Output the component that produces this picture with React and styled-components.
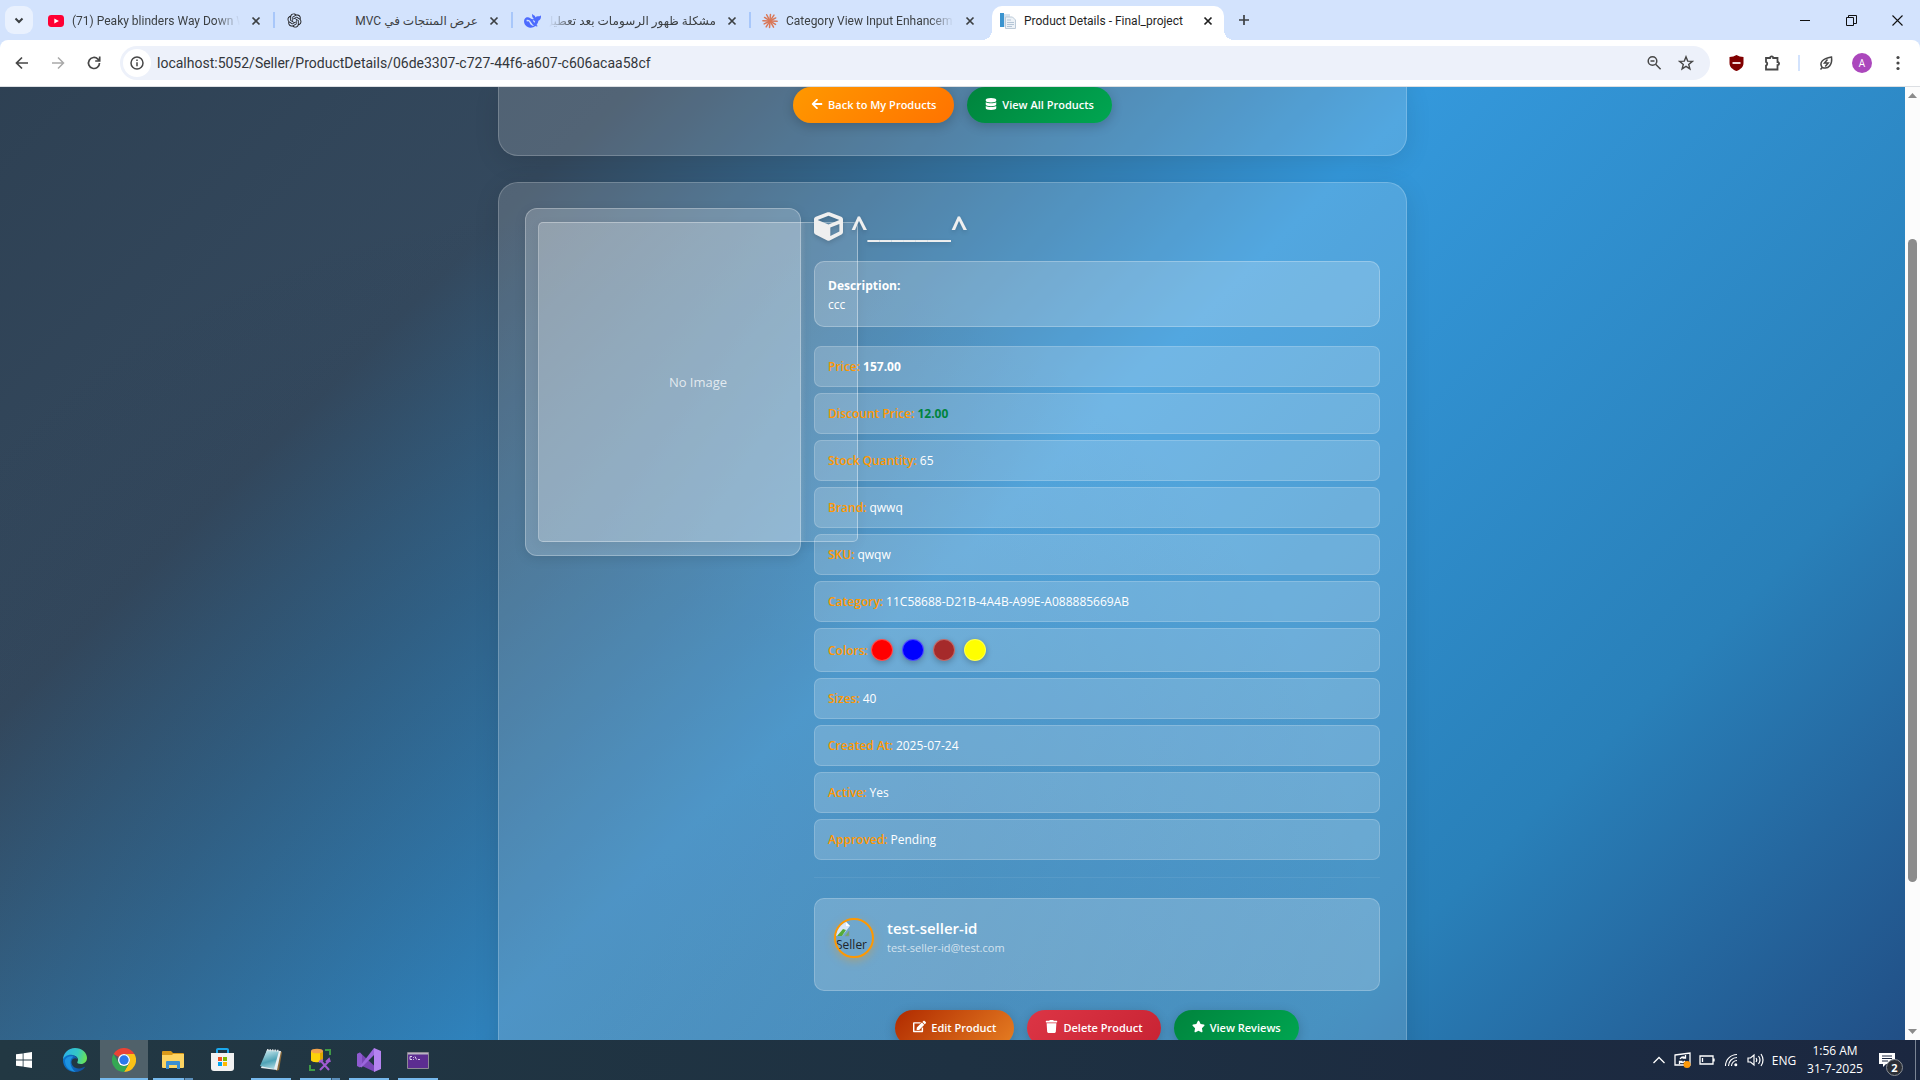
import React from 'react';
import styled, { createGlobalStyle, css } from 'styled-components';
import { FaArrowLeft, FaDatabase, FaCube, FaEdit, FaTrash, FaStar } from 'react-icons/fa';
import { RiOpenaiFill } from 'react-icons/ri';

const Global = createGlobalStyle`
  *, *::before, *::after { box-sizing: border-box; }
  body { margin: 0; font-family: "Open Sans", "Noto Sans", "DejaVu Sans", sans-serif; font-size: 12px; }
  button, input { font: inherit; border: 0; padding: 0; background: none; color: inherit; }
  h1, h2, p, dl, dt, dd, ul { margin: 0; padding: 0; }
  a { color: inherit; text-decoration: none; }
`;

const Screen = styled.div`
  display: flex;
  flex-direction: column;
  height: 100vh;
  overflow: hidden;
`;

/* ---------- browser tab strip ---------- */

const TabStrip = styled.header`
  display: flex;
  align-items: flex-end;
  height: 40px;
  padding-left: 5px;
  background: #d3e3fd;
  color: #3c4043;
`;

const TabSearch = styled.button`
  display: grid;
  place-items: center;
  width: 28px;
  height: 28px;
  margin: 0 4px 6px 0;
  border-radius: 9px;
  background: #e9f1fe;
`;

const Tab = styled.div`
  position: relative;
  display: flex;
  align-items: center;
  gap: 8px;
  width: 238px;
  height: 34px;
  padding: 0 11px 5px;
  ${(p) => p.$divided && css`
    background: linear-gradient(#a8c7fa, #a8c7fa) right 6px / 2px 16px no-repeat;
  `}
  ${(p) => p.$active && css`
    width: 232px;
    margin: 0 3px;
    padding: 0 8px 5px;
    border-radius: 10px 10px 0 0;
    background: #fff;
    color: #1f1f1f;
    &::before, &::after {
      content: "";
      position: absolute;
      bottom: 0;
      width: 10px;
      height: 10px;
    }
    &::before { left: -10px; background: radial-gradient(circle at 0 0, transparent 10px, #fff 10px); }
    &::after { right: -10px; background: radial-gradient(circle at 100% 0, transparent 10px, #fff 10px); }
  `}
`;

const TabTitle = styled.span`
  flex: 1;
  min-width: 0;
  overflow: hidden;
  white-space: nowrap;
  line-height: 20px;
  font-family: Roboto, "Noto Sans", "DejaVu Sans", sans-serif;
  font-size: 12px;
  ${(p) => p.$fade && css`mask-image: linear-gradient(to ${p.$fade}, #000 85%, transparent);`}
`;

const IconButton = styled.button`
  display: grid;
  place-items: center;
  flex: none;
  width: ${(p) => p.$w || 16}px;
  height: ${(p) => p.$h || 16}px;
`;

const WindowControls = styled.div`
  display: flex;
  margin-left: auto;
  align-self: center;
  color: #111;
`;

/* ---------- browser toolbar ---------- */

const ToolbarBack = styled.div`
  background: #d3e3fd;
`;

const Toolbar = styled.nav`
  display: flex;
  align-items: center;
  height: 47px;
  padding: 0 4px;
  border-bottom: 1px solid #dcdfe3;
  border-radius: 8px 8px 0 0;
  background: #fff;
  color: #474747;
`;

const AddressBar = styled.div`
  display: flex;
  align-items: center;
  flex: 1;
  height: 34px;
  margin: 0 8px;
  padding: 0 8px 0 3px;
  border-radius: 17px;
  background: #edf1fa;
`;

const SiteInfo = styled.button`
  display: grid;
  place-items: center;
  width: 28px;
  height: 28px;
  margin-right: 6px;
  border-radius: 50%;
  background: #fff;
`;

const Address = styled.input`
  flex: 1;
  min-width: 0;
  font-family: Roboto, "Noto Sans", sans-serif;
  font-size: 14px;
  color: #33363b;
  outline: 0;
`;

const ToolbarDivider = styled.span`
  width: 2px;
  height: 16px;
  margin: 0 8px;
  background: #d3e3fd;
`;

const Profile = styled.button`
  width: 20px;
  height: 20px;
  margin: 0 8px;
  border-radius: 50%;
  background: #ab47bc;
  color: #fff;
  font-size: 10px;
  line-height: 20px;
`;

/* ---------- page ---------- */

const Viewport = styled.div`
  display: flex;
  flex: 1;
  min-height: 0;
`;

const Page = styled.main`
  flex: 1;
  min-width: 0;
  overflow: hidden;
  padding: 0 20px;
  background:
    radial-gradient(ellipse 42% 80% at 30% 92%, rgba(28, 44, 66, 0.22), rgba(28, 44, 66, 0.16) 50%, rgba(28, 44, 66, 0) 100%),
    linear-gradient(135deg, #2c3e50 -7%, #34495e 22%, #3498db 50%, #2980b9 79%, #1e3c72 108%);
  color: #fff;
`;

const Column = styled.div`
  display: flex;
  flex-direction: column;
  gap: 26px;
  max-width: 909px;
  margin: 0 auto;
`;

const glass = css`
  border: 1px solid rgba(255, 255, 255, 0.2);
  background: rgba(255, 255, 255, 0.15);
`;

const HeaderCard = styled.section`
  ${glass}
  border-top: 0;
  border-radius: 0 0 20px 20px;
  padding: 0 26px 32px;
  box-shadow: 0 6px 26px rgba(0, 0, 0, 0.1);
`;

const ProductCard = styled.section`
  ${glass}
  display: grid;
  grid-template-columns: 276px minmax(0, 1fr);
  gap: 13px;
  border-radius: 20px;
  padding: 25px 26px;
  box-shadow: 0 6px 26px rgba(0, 0, 0, 0.1);
`;

const ButtonRow = styled.div`
  display: flex;
  justify-content: center;
  gap: 13px;
`;

const fills = {
  orange: 'linear-gradient(135deg, #ff9800, #ff7300)',
  green: 'linear-gradient(135deg, #00843d, #00a651)',
  rust: 'linear-gradient(135deg, #b02a00, #e67e22)',
  red: 'linear-gradient(135deg, #dc3545, #c82333)',
};

const PillButton = styled.button`
  display: flex;
  align-items: center;
  gap: 5px;
  height: 36px;
  padding: 0 18px;
  border-radius: 18px;
  background: ${(p) => fills[p.$fill]};
  box-shadow: 0 3px 12px rgba(0, 0, 0, 0.2);
  color: #fff;
  font-size: 11px;
  font-weight: 600;
  line-height: 18px;
  white-space: nowrap;
  padding-bottom: 1px;
  svg { margin-bottom: 2px; }
`;

const Gallery = styled.figure`
  align-self: start;
  margin: 0;
  padding: 13px 12px;
  border: 1px solid rgba(255, 255, 255, 0.28);
  border-radius: 12px;
  background: rgba(255, 255, 255, 0.2);
  box-shadow: 0 3px 12px rgba(0, 0, 0, 0.1);
`;

const Placeholder = styled.div`
  display: grid;
  place-items: center;
  width: 320px;
  height: 320px;
  border: 1px solid rgba(255, 255, 255, 0.32);
  border-radius: 5px;
  background: linear-gradient(90deg, rgba(255, 255, 255, 0.22) 82%, rgba(255, 255, 255, 0.1) 84%);
  box-shadow: 0 3px 12px rgba(0, 0, 0, 0.06);
  color: rgba(255, 255, 255, 0.75);
  font-size: 13px;
`;

const Title = styled.h1`
  display: flex;
  align-items: center;
  gap: 8px;
  height: 36px;
  margin-bottom: 17px;
  color: #efefef;
  font-size: 29px;
  line-height: 36px;
  filter: drop-shadow(0 2px 2px rgba(0, 0, 0, 0.15));
`;

const Description = styled.div`
  padding: 14px 13px 12px;
  margin-bottom: 19px;
  border: 1px solid rgba(255, 255, 255, 0.25);
  border-radius: 10px;
  background: rgba(255, 255, 255, 0.2);
  line-height: 19px;
`;

const DescriptionTitle = styled.h2`
  font-size: 12px;
  font-weight: 700;
`;

const Facts = styled.dl`
  display: grid;
  gap: 6px;
`;

const Fact = styled.div`
  display: flex;
  align-items: center;
  gap: 3px;
  padding: 10px 13px;
  border: 1px solid rgba(255, 255, 255, 0.18);
  border-radius: 7px;
  background: rgba(255, 255, 255, 0.18);
  line-height: 19px;
`;

const FactName = styled.dt`
  color: #ff9800;
  font-weight: 600;
`;

const tones = { plain: '#fff', strong: '#fff', sale: '#00843d' };

const FactValue = styled.dd`
  color: ${(p) => tones[p.$tone || 'plain']};
  font-weight: ${(p) => (p.$tone ? 700 : 400)};
`;

const Swatches = styled.ul`
  display: flex;
  gap: 9px;
  list-style: none;
`;

const Swatch = styled.li`
  width: 22px;
  height: 22px;
  border: 1px solid rgba(255, 255, 255, 0.3);
  border-radius: 50%;
  background: ${(p) => p.$color};
  box-shadow: 0 2px 6px rgba(0, 0, 0, 0.25);
`;

const Rule = styled.hr`
  height: 1px;
  margin: 17px 0 20px;
  border: 0;
  background: rgba(255, 255, 255, 0.07);
`;

const Seller = styled.section`
  ${glass}
  display: flex;
  gap: 13px;
  min-height: 93px;
  padding: 19px;
  margin-bottom: 19px;
  border-radius: 10px;
  background: rgba(255, 255, 255, 0.2);
`;

const Avatar = styled.div`
  display: flex;
  flex-direction: column;
  flex: none;
  width: 40px;
  height: 40px;
  overflow: hidden;
  padding-top: 2px;
  border: 2px solid #ff9800;
  border-radius: 50%;
  box-shadow: 0 3px 10px rgba(255, 152, 0, 0.35);
  color: #212529;
  font-size: 12px;
  line-height: 16px;
  svg { display: block; flex: none; }
`;

const SellerName = styled.h2`
  font-size: 15px;
  font-weight: 600;
  line-height: 20px;
`;

const SellerMail = styled.p`
  color: rgba(255, 255, 255, 0.7);
  font-size: 11px;
  line-height: 20px;
`;

const ScrollTrack = styled.aside`
  display: flex;
  flex-direction: column;
  align-items: center;
  width: 15px;
  padding: 6px 0;
  background: #fcfcfc;
  color: #8b8b8b;
`;

const ScrollThumb = styled.div`
  width: 9px;
  border-radius: 5px;
  background: #8b8b8b;
  flex: 642;
`;

const ScrollSpace = styled.div`
  flex: ${(p) => p.$part};
`;

/* ---------- taskbar ---------- */

const Taskbar = styled.footer`
  display: flex;
  height: 40px;
  background: linear-gradient(90deg, #223843, #1e3142 50%, #1b2740);
  color: #fff;
`;

const Apps = styled.div`
  display: grid;
  grid-template-columns: 50px repeat(8, 48px);
  column-gap: 1px;
`;

const AppButton = styled.button`
  display: grid;
  place-items: center;
  padding-right: ${(p) => (p.$start ? 2 : 0)}px;
  ${(p) => p.$running && css`
    background: linear-gradient(#76b9ed, #76b9ed) center bottom / 40px 2px no-repeat;
  `}
  ${(p) => p.$stacked && css`
    background:
      linear-gradient(90deg, #76b9ed 31px, #35536a 31px, #35536a 32px, #5b8fbb 32px) center bottom / 40px 2px no-repeat;
  `}
  ${(p) => p.$current && css`
    background: linear-gradient(#76b9ed, #76b9ed) center bottom / 48px 2px no-repeat, #50616a;
  `}
`;

const Tray = styled.div`
  display: flex;
  align-items: center;
  margin-left: auto;
  font-size: 12px;
`;

const Language = styled.button`
  width: 34px;
  height: 40px;
`;

const Clock = styled.time`
  width: 68px;
  line-height: 18px;
  text-align: center;
  white-space: pre-line;
`;

const Notices = styled.button`
  width: 47px;
  height: 40px;
  display: grid;
  place-items: center;
  position: relative;
  border-right: 1px solid #7a8494;
  margin-right: 4px;
  svg { margin-right: 10px; }
`;

const Badge = styled.span`
  position: absolute;
  left: 17px;
  top: 19px;
  width: 17px;
  height: 17px;
  border: 1px solid #8a8f96;
  border-radius: 50%;
  background: #2b2f36;
  font-size: 11px;
  font-weight: 700;
  line-height: 15px;
`;

/* ---------- drawings ---------- */

const Line = ({ d, w = 16, h = w, s = 1.5, box, children, ...rest }) => (
  <svg width={w} height={h} viewBox={box || `0 0 ${w} ${h}`} fill="none" stroke="currentColor" strokeWidth={s} {...rest}>
    {d && <path d={d} />}
    {children}
  </svg>
);

const CloseIcon = () => <Line d="M4.5 4.5l7 7M11.5 4.5l-7 7" s={1.7} />;

const YouTube = () => (
  <svg width="16" height="16" viewBox="0 0 16 16">
    <rect y="2" width="16" height="12" rx="3.4" fill="#ff0033" />
    <path d="M6.3 5.4l4.6 2.6-4.6 2.6z" fill="#fff" />
  </svg>
);

const DeepSeek = () => (
  <svg width="17" height="16" viewBox="0 0 24 22">
    <path fill="#4d6bfe" d="M23.7 3.2c-.3-.1-.4.1-.6.3-1 .9-2 1-3.1.9-1.5-.1-2.800.4-3.9 1.5-.3-1.5-1.1-2.3-2.3-2.9-.6-.3-1-.6-1.2-1.4-.2-.5-.6-.6-.8 0-.8 2.100-.3 4.200 1.200 5.500.9.8.7 1.600-.3 1.500C9.500 8.200 6.800 4 3 6.200.9 7.400-.2 9.800.1 12.500c.5 4.300 4 7.600 8.500 8 3.200.3 5.300-.8 7.200-2.300.7.3 2.200.7 3.100.3.5-.3.5-.7.1-.9-1-.5-1.300-.7-1.300-1 1.300-1.600 2.300-3.400 2.600-5.800 1.900-.5 3.400-2.300 3.600-5 .1-1.100.1-2.500-.2-2.600z" />
    <path fill="#d3e3fd" d="M3.700 9.400c3.500-.9 5.600 2 7 4.500 1.200 2.100 2.300 2.900 3.700 3.800-5.400.4-6-4.100-7.300-5.700-.8-.9-2.100-.9-2.800-.1-.7-.9-.9-1.600-.6-2.500zM12.200 10c.9-.6 2.400 0 3.100 1.400.6 1.300-.1 2.100-1 1.700-.8-.3-1.100-2.500-2.100-3.100z" />
  </svg>
);

const Claude = () => (
  <svg width="16" height="16" viewBox="0 0 16 16" stroke="#d97757" strokeWidth="1.5" strokeLinecap="round">
    {[4, 34, 62, 93, 122, 150, 184, 213, 244, 272, 303, 332].map((a, i) => (
      <path key={a} d={`M8 7.5V${i % 2 ? 0.9 : 1.5}`} transform={`rotate(${a} 8 8)`} />
    ))}
  </svg>
);

const PageIcon = () => (
  <svg width="16" height="16" viewBox="0 0 16 16">
    <path d="M0 0h4v14H0z" fill="#3b94cf" />
    <path d="M4 1h6v4H5v9H4z" fill="#d5e2ee" />
    <path d="M5.5 4h7l3 3v8.500h-10z" fill="#edf2f7" stroke="#bccad8" />
    <path d="M7 7h4M7 9.500h7M7 11.500h7M7 13.500h5" stroke="#b4c5d6" />
  </svg>
);

const BrokenImage = () => (
  <svg width="16" height="15" viewBox="0 0 16 15">
    <path d="M0 0h10l4 4-8 10H0z" fill="#d9e6f7" />
    <path d="M10 0v4h4z" fill="#fff" />
    <path d="M1 14l6-7 3 1-4 6z" fill="#54ab3a" />
    <path d="M9 14l4-5v5z" fill="#6ab35a" stroke="#8a949c" strokeWidth=".7" />
  </svg>
);

const Edge = () => (
  <svg width="24" height="24" viewBox="0 0 24 24">
    <defs>
      <linearGradient id="edgeTop" x1="0" x2="1" y1=".3" y2=".5"><stop stopColor="#2bb1e8" /><stop offset=".6" stopColor="#35c9c3" /><stop offset="1" stopColor="#6be354" /></linearGradient>
      <linearGradient id="edgeLow" x1="0" x2="1"><stop stopColor="#0c77cf" /><stop offset="1" stopColor="#124e9c" /></linearGradient>
    </defs>
    <path d="M0 12C0 5 5.300 0 12 0c7 0 12 4.600 12 10 0 3.600-2.800 6-6 6-2.600 0-4.300-.9-3.600-2 1.600-2.200.2-6.500-4.400-6.500C5 7.500 1 9.500 0 12z" fill="url(#edgeTop)" />
    <path d="M0 12c1-3.500 5-5.800 9.500-5 2.500.4 4.500 2 4.800 4-2-1.500-5.300-.5-5.800 2.600-.5 3.900 3.300 7.500 8 6.800 2.200-.3 3.800-1.200 4.700-1.500.7-.2.800.3.400.9C19.700 22.300 16.200 24 12 24 5 24 0 18.600 0 12z" fill="url(#edgeLow)" />
    <path d="M2 12c1.500-3 5-4.500 8.500-3.300C6 10.500 6.300 19 12.500 23.900 5.500 23 1.500 17.500 2 12z" fill="#1c93e0" />
  </svg>
);

const Chrome = () => (
  <svg width="24" height="24" viewBox="0 0 24 24">
    <path d="M1.600 6A12 12 0 0 1 22.400 6H12a6 6 0 0 0-5.200 3z" fill="#ea4335" />
    <path d="M22.400 6A12 12 0 0 1 12 24l5.200-9A6 6 0 0 0 12 6z" fill="#fbc116" />
    <path d="M12 24A12 12 0 0 1 1.600 6l5.200 9A6 6 0 0 0 17.200 15z" fill="#34a853" />
    <circle cx="12" cy="12" r="6" fill="#fff" />
    <circle cx="12" cy="12" r="4.700" fill="#2b78ec" />
  </svg>
);

const Explorer = () => (
  <svg width="22" height="18" viewBox="0 0 22 18">
    <path d="M0 1q0-1 1-1h8l2 2h10q1 0 1 1v4H0z" fill="#d99a1a" />
    <path d="M0 4h10l1-1h11v13q0 1-1 1H1q-1 0-1-1z" fill="#fdd462" />
    <path d="M4 18v-7q0-1 1-1h12q1 0 1 1v7h-3v-4H7v4z" fill="#3b8fd2" />
  </svg>
);

const Store = () => (
  <svg width="23" height="24" viewBox="0 0 23 24">
    <path d="M6 6V1.800Q6 1 7 1h9q1 0 1 .8V6" fill="none" stroke="#1ba8ee" strokeWidth="2" />
    <path d="M0 5h23v15q0 3-3 3H3q-3 0-3-3z" fill="#f2f2f2" />
    <path d="M7 9h4v4H7z" fill="#f25022" /><path d="M12 9h4v4h-4z" fill="#7fba00" />
    <path d="M7 14h4v4H7z" fill="#00a4ef" /><path d="M12 14h4v4h-4z" fill="#ffb900" />
  </svg>
);

const Notepad = () => (
  <svg width="24" height="24" viewBox="0 0 24 24">
    <defs><linearGradient id="pad" x1=".3" x2=".6" y2="1"><stop stopColor="#c8e8ee" /><stop offset=".6" stopColor="#4fa3b6" /><stop offset="1" stopColor="#a9d6df" /></linearGradient></defs>
    <path d="M21 3l2 1-3 18-3 1z" fill="#8a6a3c" />
    <path d="M8 2l14 1-4 19-16-2z" fill="#e8eef0" />
    <path d="M8 2l12 1-5 18L1 18z" fill="url(#pad)" />
    <path d="M8 2l12 .8" stroke="#dfe3e5" strokeWidth="2" strokeDasharray="1.5 1" />
  </svg>
);

const Ssms = () => (
  <svg width="24" height="24" viewBox="0 0 24 24">
    <path d="M3 3v9c0 3 12 3 12 0V3z" fill="#fbd20a" /><path d="M12 3v10.500c2-.4 3-1 3-1.500V3z" fill="#e0a800" />
    <ellipse cx="9" cy="3" rx="6" ry="2.300" fill="#f0a24c" />
    <path d="M17 2h5v5M2 17v5h5" fill="none" stroke="#3f9a46" strokeWidth="2" />
    <path d="M12 22l9-9M13 13l8 9M11 14l4-2M18 14l3-3 1 3" fill="none" stroke="#a05bd0" strokeWidth="2" />
  </svg>
);

const VisualStudio = () => (
  <svg width="24" height="24" viewBox="0 0 24 24">
    <path d="M0 6l3-1.500 15 14V24L2 16.500 0 17z" fill="#7a47b8" />
    <path d="M0 6l3-1.500L5 7v10l-2 2.500L0 18z" fill="#8f5bd0" />
    <path d="M4.500 19.500l-1.700-1L17 0v7z" fill="#9b66dd" />
    <path d="M17 0l7 3v18l-7 3z" fill="#b583f0" />
  </svg>
);

const Terminal = () => (
  <svg width="22" height="17" viewBox="0 0 22 17">
    <path d="M.5.5h21v16H.5z" fill="#5c2d91" stroke="#8d8a94" />
    <path d="M1 1h20v1.500H1z" fill="#b9b4c2" />
    <path d="M5 4.500H3v3h2M6.500 5v.8M6.500 7v.8M8 4.500l1.500 3M11 7.500h2" fill="none" stroke="#e8def4" strokeWidth=".9" />
  </svg>
);

/* ---------- data ---------- */

const tabs = [
  { title: '(71) Peaky blinders Way Down W', icon: <YouTube />, fade: 'right', divided: true },
  { title: 'عرض المنتجات في MVC', icon: <RiOpenaiFill size={17} color="#202123" />, dir: 'rtl', divided: true },
  { title: 'مشكلة ظهور الرسومات بعد تعطيل', icon: <DeepSeek />, dir: 'rtl', fade: 'left', divided: true },
  { title: 'Category View Input Enhancem', icon: <Claude />, fade: 'right' },
  { title: 'Product Details - Final_project', icon: <PageIcon />, active: true },
];

const leading = [
  { name: 'Price:', value: '157.00', tone: 'strong' },
  { name: 'Discount Price:', value: '12.00', tone: 'sale' },
  { name: 'Stock Quantity:', value: '65' },
  { name: 'Brand:', value: 'qwwq' },
  { name: 'SKU:', value: 'qwqw' },
  { name: 'Category:', value: '11C58688-D21B-4A4B-A99E-A088885669AB' },
];

const trailing = [
  { name: 'Sizes:', value: '40' },
  { name: 'Created At:', value: '2025-07-24' },
  { name: 'Active:', value: 'Yes' },
  { name: 'Approved:', value: 'Pending' },
];

const colors = ['red', 'blue', 'brown', 'yellow'];

const apps = [
  { name: 'Edge', icon: <Edge /> },
  { name: 'Chrome', icon: <Chrome />, current: true },
  { name: 'File Explorer', icon: <Explorer />, stacked: true },
  { name: 'Store', icon: <Store /> },
  { name: 'Notepad', icon: <Notepad />, running: true },
  { name: 'SQL Server', icon: <Ssms />, stacked: true },
  { name: 'Visual Studio', icon: <VisualStudio />, running: true },
  { name: 'Terminal', icon: <Terminal />, running: true },
];

const FactRow = ({ name, value, tone }) => (
  <Fact>
    <FactName>{name}</FactName>
    <FactValue $tone={tone}>{value}</FactValue>
  </Fact>
);

function BrowserChrome() {
  return (
    <>
      <TabStrip>
        <TabSearch aria-label="Search tabs"><Line d="M4.5 6.500L8 10l3.500-3.500" s={2} /></TabSearch>
        {tabs.map((t) => (
          <Tab key={t.title} $active={t.active} $divided={t.divided}>
            {t.icon}
            <TabTitle dir={t.dir} $fade={t.fade}>{t.title}</TabTitle>
            <IconButton aria-label="Close tab"><CloseIcon /></IconButton>
          </Tab>
        ))}
        <IconButton $w={34} $h={40} aria-label="New tab"><Line d="M8 3v10M3 8h10" s={1.7} /></IconButton>
        <WindowControls>
          <IconButton $w={46} $h={38} aria-label="Minimize"><Line w={10} d="M0 5.500h10" s={1} /></IconButton>
          <IconButton $w={46} $h={38} aria-label="Restore"><Line w={11} d="M.5 2.500h7v8h-7zM2.500 2.500v-2h8v8h-3" s={1} /></IconButton>
          <IconButton $w={46} $h={38} aria-label="Close"><Line w={11} d="M.5.5l10 10M10.500.5l-10 10" s={1.1} /></IconButton>
        </WindowControls>
      </TabStrip>
      <ToolbarBack>
        <Toolbar>
          <IconButton $w={36} $h={34} aria-label="Back"><Line d="M14 8H2.500M8 2.500L2.500 8 8 13.500" s={1.7} /></IconButton>
          <IconButton $w={36} $h={34} aria-label="Forward"><Line d="M2 8h11.500M8 2.500L13.500 8 8 13.500" color="#a9a9a9" /></IconButton>
          <IconButton $w={36} $h={34} aria-label="Reload"><Line d="M13.500 8A5.500 5.500 0 1 1 11.900 4.100L13.500 5.700M13.700 1.500v4.500H9.200" s={1.7} /></IconButton>
          <AddressBar>
            <SiteInfo aria-label="Site information">
              <Line w={16} s={1.5}><circle cx="8" cy="8" r="6" /><path d="M8 7.200v4M8 4.600v1.500" /></Line>
            </SiteInfo>
            <Address aria-label="Address" defaultValue="localhost:5052/Seller/ProductDetails/06de3307-c727-44f6-a607-c606acaa58cf" />
            <IconButton $w={32} $h={32} aria-label="Zoom"><Line><circle cx="6.500" cy="6" r="4.300" /><path d="M9.600 9.300l5 5M4.500 6h4" /></Line></IconButton>
            <IconButton $w={32} $h={32} aria-label="Bookmark"><Line d="M8 1.800l1.700 4.300 4.600.3-3.600 3 1.200 4.500L8 11.400l-3.900 2.500 1.200-4.500-3.600-3 4.600-.3z" s={1.4} /></IconButton>
          </AddressBar>
          <IconButton $w={36} $h={34} aria-label="Blocker">
            <svg width="15" height="16" viewBox="0 0 15 16"><path d="M7.500 0q3 1.800 7 2v6c0 4-3 6.500-7 8-4-1.500-7-4-7-8V2q4-.2 7-2z" fill="#800000" /><path d="M3.500 8h8" stroke="#f2dada" strokeWidth="2" /></svg>
          </IconButton>
          <IconButton $w={36} $h={34} aria-label="Extensions"><Line d="M2 3h4a1.600 1.600 0 0 1 3.200 0h4.300v4a1.600 1.600 0 0 1 0 3.200v4.300H2v-4a2 2 0 0 0 0-3.700z" s={1.8} /></IconButton>
          <ToolbarDivider />
          <IconButton $w={36} $h={34} aria-label="Performance"><Line d="M2.500 14.500l1.700-2C1 8 4 3.500 13.500 2 14.500 9 11 15 4.200 12.500M9.500 4.500L6.500 8h3.700l-3 3.500" s={1.5} /></IconButton>
          <Profile aria-label="Profile">A</Profile>
          <IconButton $w={36} $h={34} aria-label="Menu">
            <svg width="4" height="16" fill="#474747"><circle cx="2" cy="2.500" r="1.600" /><circle cx="2" cy="8" r="1.600" /><circle cx="2" cy="13.500" r="1.600" /></svg>
          </IconButton>
        </Toolbar>
      </ToolbarBack>
    </>
  );
}

function ProductPage() {
  return (
    <Viewport>
      <Page>
        <Column>
          <HeaderCard>
            <ButtonRow>
              <PillButton $fill="orange"><FaArrowLeft size={12} />Back to My Products</PillButton>
              <PillButton $fill="green"><FaDatabase size={12} />View All Products</PillButton>
            </ButtonRow>
          </HeaderCard>
          <ProductCard>
            <Gallery><Placeholder>No Image</Placeholder></Gallery>
            <div>
              <Title><FaCube size={29} />^_______^</Title>
              <Description>
                <DescriptionTitle>Description:</DescriptionTitle>
                <p>ccc</p>
              </Description>
              <Facts>
                {leading.map((f) => <FactRow key={f.name} {...f} />)}
                <Fact>
                  <FactName>Colors:</FactName>
                  <dd><Swatches>{colors.map((c) => <Swatch key={c} $color={c} aria-label={c} />)}</Swatches></dd>
                </Fact>
                {trailing.map((f) => <FactRow key={f.name} {...f} />)}
              </Facts>
              <Rule />
              <Seller>
                <Avatar><BrokenImage />Seller</Avatar>
                <div>
                  <SellerName>test-seller-id</SellerName>
                  <SellerMail>test-seller-id@test.com</SellerMail>
                </div>
              </Seller>
              <ButtonRow>
                <PillButton $fill="rust"><FaEdit size={13} />Edit Product</PillButton>
                <PillButton $fill="red"><FaTrash size={13} />Delete Product</PillButton>
                <PillButton $fill="green"><FaStar size={13} />View Reviews</PillButton>
              </ButtonRow>
            </div>
          </ProductCard>
        </Column>
      </Page>
      <ScrollTrack>
        <svg width="9" height="5"><path d="M0 5l4.500-5L9 5z" fill="#8b8b8b" /></svg>
        <ScrollSpace $part={141} />
        <ScrollThumb />
        <ScrollSpace $part={147} />
        <svg width="9" height="5"><path d="M0 0l4.500 5L9 0z" fill="#8b8b8b" /></svg>
      </ScrollTrack>
    </Viewport>
  );
}

function WindowsTaskbar() {
  return (
    <Taskbar>
      <Apps>
        <AppButton $start aria-label="Start">
          <svg width="16" height="16" viewBox="0 0 16 16" fill="#fff"><path d="M0 2.300L6.700 1.400v6.200H0zM7.500 1.200L16 0v7.600H7.500zM0 8.400h6.700v6.200L0 13.700zM7.500 8.400H16V16l-8.500-1.200z" /></svg>
        </AppButton>
        {apps.map((a) => (
          <AppButton key={a.name} aria-label={a.name} $running={a.running} $stacked={a.stacked} $current={a.current}>{a.icon}</AppButton>
        ))}
      </Apps>
      <Tray>
        <IconButton $w={24} $h={40} aria-label="Hidden icons"><Line w={12} h={8} d="M.5 7L6 1.500 11.500 7" s={1.3} /></IconButton>
        <IconButton $w={24} $h={40} aria-label="Update">
          <Line w={18} h={16} s={1.3} d="M1 3l15-2v12l-15 0zM6 7q2-3 5-1.500M11.500 3v3h-3M11 9q-2 2.500-5 1M5.500 12V9.500h3"><circle cx="13" cy="12.500" r="3.500" fill="#ff9a0a" stroke="none" /></Line>
        </IconButton>
        <IconButton $w={24} $h={40} aria-label="Battery"><Line w={16} h={10} s={1.3} d="M1 1h13v8H1zM15 3.500v3M3.500 3v4" /></IconButton>
        <IconButton $w={24} $h={40} aria-label="Network"><Line w={14} h={14} s={1.1} d="M1.500 13A11.500 11.500 0 0 1 13 1.500M4.500 13A8.500 8.500 0 0 1 13 4.500M7.500 13A5.500 5.500 0 0 1 13 7.500"><circle cx="11.800" cy="11.800" r="1.500" fill="#fff" stroke="none" /></Line></IconButton>
        <IconButton $w={24} $h={40} aria-label="Volume"><Line w={17} h={14} s={1.2} d="M1 5h2.500L7 2v10L3.500 9H1zM9 5q1.500 2 0 4M11.500 3q3 4 0 8M14 1q4 6 0 12" /></IconButton>
        <Language>ENG</Language>
        <Clock>{'1:56 AM\n31-7-2025'}</Clock>
        <Notices aria-label="Notifications">
          <svg width="16" height="16" viewBox="0 0 16 16"><path d="M0 1h16v11H7l-3 3v-3H0z" fill="#fff" /><path d="M3 4h10M3 6.500h10M3 9h6" stroke="#1b2740" /></svg>
          <Badge>2</Badge>
        </Notices>
      </Tray>
    </Taskbar>
  );
}

export default function App() {
  return (
    <Screen>
      <Global />
      <BrowserChrome />
      <ProductPage />
      <WindowsTaskbar />
    </Screen>
  );
}
